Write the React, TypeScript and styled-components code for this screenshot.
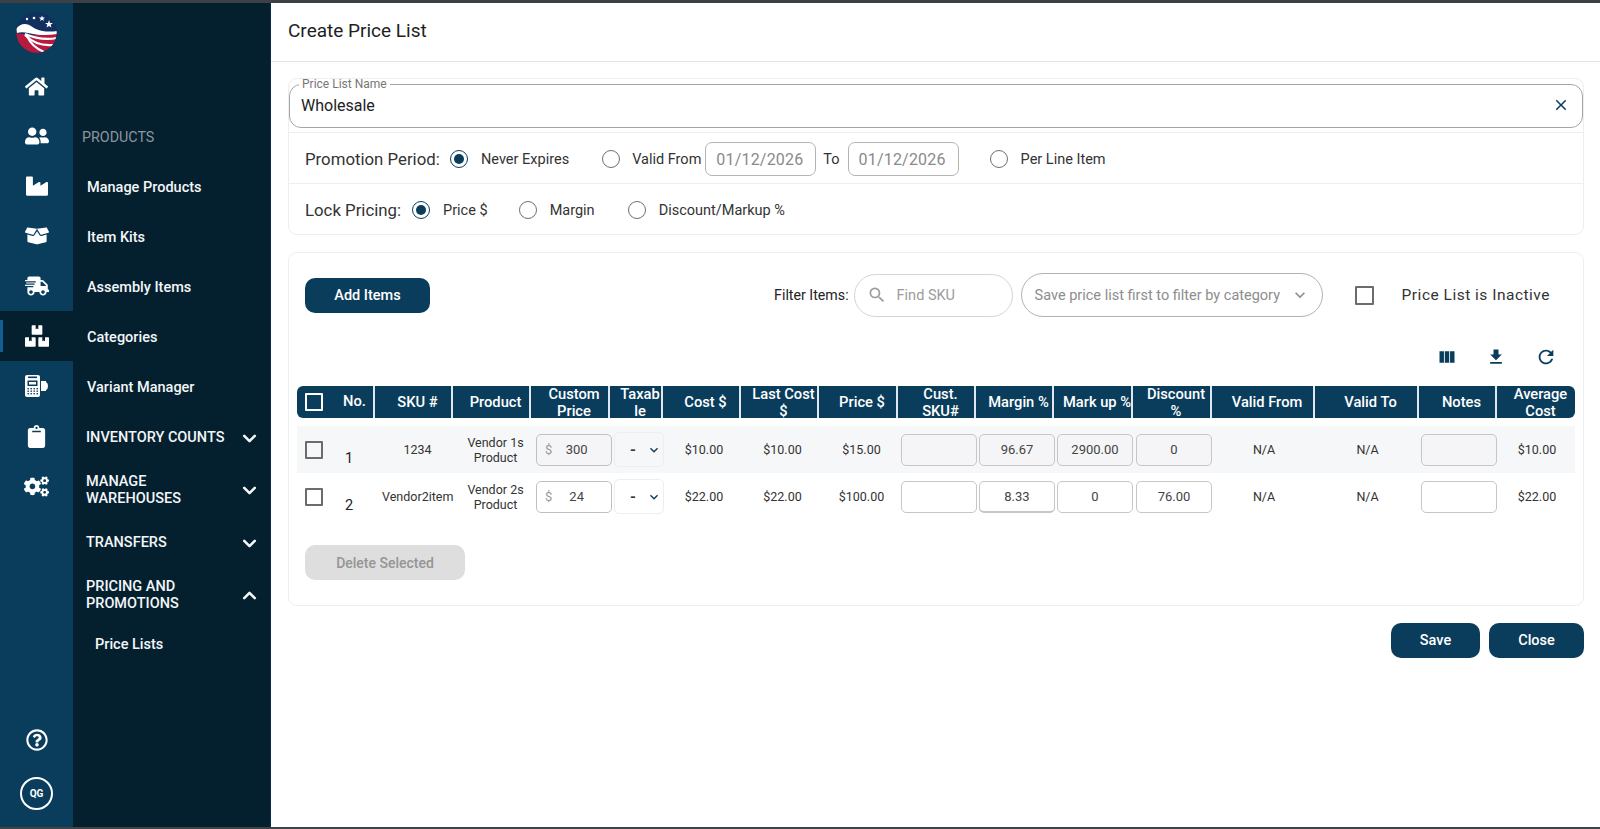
import React from "react";
import styled, { createGlobalStyle } from "styled-components";
import { FaHome, FaUserFriends, FaIndustry, FaBoxOpen, FaShippingFast, FaBoxes, FaClipboard, FaCogs, FaRegQuestionCircle } from "react-icons/fa";
import { MdViewColumn, MdFileDownload, MdRefresh, MdClose, MdSearch, MdKeyboardArrowDown } from "react-icons/md";
import { ChevronDown, ChevronUp } from "lucide-react";

const NAVY = "#0a3d5c";
const COLS = "78px 78px 78px 79px 53px 78px 78px 79px 78px 78px 79px 79px 103px 104px 78px 78px";

const Global = createGlobalStyle`
  html, body { margin: 0; padding: 0; height: 100%; background: #fff; }
  body { font-family: Roboto, "Liberation Sans", sans-serif; color: #222; overflow: hidden; }
  * { box-sizing: border-box; }
`;

const Frame = styled.div`
  height: 829px;
  display: flex;
  flex-direction: column;
  border-top: 3px solid #3b4144;
  border-bottom: 2px solid #3f4345;
`;
const Shell = styled.div`
  flex: 1;
  min-height: 0;
  display: flex;
`;
const Rail = styled.aside`
  width: 73px;
  background: ${NAVY};
  display: flex;
  flex-direction: column;
  color: #fff;
`;
const LogoBox = styled.div`
  height: 58px;
  display: flex;
  align-items: center;
  justify-content: center;
`;
const RailItem = styled.div<{ $active?: boolean }>`
  height: 50px;
  display: flex;
  align-items: center;
  justify-content: center;
  position: relative;
  background: ${(p) => (p.$active ? "#04202f" : "transparent")};
  ${(p) =>
    p.$active
      ? `&::before { content: ""; position: absolute; left: 0; top: 9px; width: 3px; height: 32px; background: #0f5f92; }`
      : ""}
`;
const RailFoot = styled.div`
  margin-top: auto;
  display: flex;
  flex-direction: column;
  align-items: center;
  gap: 26px;
  padding-bottom: 17px;
`;
const Avatar = styled.div`
  width: 33px;
  height: 33px;
  border: 2px solid #fff;
  border-radius: 50%;
  display: flex;
  align-items: center;
  justify-content: center;
  font-size: 10px;
  font-weight: 700;
`;
const Nav = styled.nav`
  width: 198px;
  background: #04202f;
  border-right: 1px solid #0a2c52;
  padding-top: 109px;
  color: #fff;
`;
const NavHead = styled.div`
  height: 50px;
  display: flex;
  align-items: center;
  padding-left: 9px;
  font-size: 14.3px;
  color: #8b969d;
`;
const NavLink = styled.div`
  height: 50px;
  display: flex;
  align-items: center;
  padding-left: 14px;
  font-size: 14.5px;
  font-weight: 500;
  color: #f3f6f8;
`;
const NavGroup = styled.div<{ $h: number }>`
  height: ${(p) => p.$h}px;
  display: flex;
  align-items: center;
  justify-content: space-between;
  padding: 0 10px 0 13px;
  font-size: 14.5px;
  font-weight: 500;
  line-height: 17.5px;
  color: #f3f6f8;
`;
const NavGroupText = styled.span`
  width: 146px;
`;
const NavGroupWrapped = styled(NavGroupText)`
  width: 130px;
`;
const NavSub = styled.div`
  height: 48px;
  display: flex;
  align-items: center;
  padding-left: 22px;
  font-size: 14.5px;
  font-weight: 500;
  color: #f3f6f8;
`;
const Main = styled.main`
  flex: 1;
  min-width: 0;
  background: #fff;
`;
const TitleBar = styled.header`
  height: 59px;
  border-bottom: 1px solid #e2e4e6;
  display: flex;
  align-items: center;
  padding: 0 0 4px 17px;
  font-size: 19px;
  color: #1e1e1e;
`;
const Body = styled.div`
  padding: 16px 16px 0 17px;
`;
const Card = styled.section`
  border: 1px solid #eceef0;
  border-radius: 9px;
`;
const NameField = styled.fieldset`
  margin: -1px 0 0;
  height: 50px;
  padding: 0 12px 0 11px;
  border: 1.5px solid #a3a6a8;
  border-radius: 12px;
  display: flex;
  align-items: center;
  justify-content: space-between;
`;
const NameLegend = styled.legend`
  font-size: 12px;
  line-height: 12px;
  padding: 0 3px;
  margin-left: -2px;
  color: #777;
`;
const NameInput = styled.input`
  flex: 1;
  border: 0;
  outline: 0;
  padding: 0;
  margin-top: -6px;
  font: 400 16px Roboto, sans-serif;
  color: #222;
  background: transparent;
`;
const ClearIcon = styled(MdClose)`
  margin-top: -7px;
  color: ${NAVY};
`;
const OptionRow = styled.div<{ $line?: boolean }>`
  height: 51px;
  display: flex;
  align-items: center;
  padding: 2px 0 0 16px;
  border-top: ${(p) => (p.$line ? "1px solid #eceef0" : "0")};
`;
const FirstRow = styled(OptionRow)`
  margin-top: 4px;
`;
const RowLabel = styled.span<{ $w: number }>`
  width: ${(p) => p.$w}px;
  font-size: 16.8px;
  color: #333;
  flex: none;
  white-space: nowrap;
`;
const Radio = styled.span<{ $on?: boolean; $left: number }>`
  width: 18px;
  height: 18px;
  margin-left: ${(p) => p.$left}px;
  flex: none;
  border-radius: 50%;
  border: 1.6px solid ${(p) => (p.$on ? NAVY : "#6f6f6f")};
  display: flex;
  align-items: center;
  justify-content: center;
  &::after {
    content: "";
    width: 10px;
    height: 10px;
    border-radius: 50%;
    background: ${(p) => (p.$on ? NAVY : "transparent")};
  }
`;
const RadioText = styled.span<{ $left?: number }>`
  margin-left: ${(p) => p.$left ?? 13}px;
  font-size: 14.5px;
  color: #333;
  white-space: nowrap;
`;
const DateBox = styled.div<{ $left: number }>`
  margin-left: ${(p) => p.$left}px;
  width: 111px;
  height: 34px;
  border: 1px solid #b4b4b4;
  border-radius: 7px;
  display: flex;
  align-items: center;
  justify-content: center;
  padding-right: 2px;
  font-size: 16px;
  color: #8a8a8a;
  letter-spacing: 0.2px;
`;
const TableCard = styled(Card)`
  margin-top: 17px;
  padding: 0 8px 25px;
`;
const Toolbar = styled.div`
  height: 84px;
  padding: 0 25px 0 8px;
  display: flex;
  align-items: center;
`;
const PrimaryButton = styled.button<{ $w: number }>`
  width: ${(p) => p.$w}px;
  height: 35px;
  border: 0;
  border-radius: 10px;
  background: ${NAVY};
  color: #fff;
  font: 500 14.5px Roboto, sans-serif;
  padding: 0;
`;
const FilterLabel = styled.span`
  margin-left: auto;
  font-size: 14.2px;
  color: #222;
`;
const SkuBox = styled.div`
  margin-left: 5px;
  width: 159px;
  height: 43px;
  border: 1px solid #d4d4d4;
  border-radius: 22px;
  display: flex;
  align-items: center;
  padding-left: 12px;
  gap: 10px;
  color: #9c9c9c;
  font-size: 14.5px;
`;
const CategorySelect = styled.div`
  margin-left: 8px;
  width: 302px;
  height: 44px;
  border: 1.5px solid #b3b3b3;
  border-radius: 22px;
  display: flex;
  align-items: center;
  justify-content: space-between;
  padding: 0 12px 0 13px;
  color: #8d8d8d;
  font-size: 14.5px;
  white-space: nowrap;
`;
const Check = styled.span<{ $light?: boolean; $size?: number }>`
  display: block;
  flex: none;
  width: ${(p) => p.$size ?? 18}px;
  height: ${(p) => p.$size ?? 18}px;
  border: 2px solid ${(p) => (p.$light ? "#fff" : "#6c6c6c")};
  border-radius: 1px;
`;
const InactiveCheck = styled(Check)`
  margin-left: 32px;
`;
const InactiveText = styled.span`
  margin-left: 28px;
  font-size: 15.5px;
  letter-spacing: 0.5px;
  color: #333;
`;
const TableTools = styled.div`
  height: 40px;
  display: flex;
  align-items: center;
  justify-content: flex-end;
  gap: 29px;
  padding-right: 18px;
  color: ${NAVY};
`;
const HeadRow = styled.div`
  display: grid;
  grid-template-columns: ${COLS};
  height: 32px;
  margin-top: 9px;
  background: ${NAVY};
  border-radius: 6px;
  overflow: hidden;
  margin-bottom: 8px;
`;
const HeadCell = styled.div`
  border-right: 2px solid #dfe8ee;
  display: flex;
  align-items: center;
  justify-content: center;
  text-align: center;
  color: #fff;
  font-size: 14.7px;
  font-weight: 500;
  line-height: 17.5px;
  height: 32px;
  padding: 2px 0 0 9px;
  overflow: hidden;
  white-space: nowrap;
  &:last-child { border-right: 0; }
`;
const HeadSelect = styled(HeadCell)`
  justify-content: flex-start;
  padding: 0 0 0 8px;
  gap: 20px;
`;
const Row = styled.div<{ $shade?: boolean }>`
  display: grid;
  grid-template-columns: ${COLS};
  height: 47px;
  background: ${(p) => (p.$shade ? "#f6f7f9" : "#fff")};
  align-items: center;
`;
const SelectCell = styled.div`
  display: flex;
  align-items: center;
  padding-left: 8px;
  gap: 22px;
`;
const RowNo = styled.span`
  font-size: 14.5px;
  padding-top: 17px;
  color: #222;
`;
const TextCell = styled.div<{ $shift?: number }>`
  padding-left: ${(p) => p.$shift ?? 4}px;
  text-align: center;
  font-size: 12.5px;
  line-height: 15px;
  color: #333;
`;
const CellInput = styled.input<{ $shade?: boolean; $inset?: number; $strong?: boolean }>`
  width: 76px;
  height: 32px;
  margin-left: ${(p) => p.$inset ?? 3}px;
  border: 1px solid #c6c6c6;
  border-bottom-width: ${(p) => (p.$strong ? 2 : 1)}px;
  border-radius: 5px;
  background: ${(p) => (p.$shade ? "#f5f5f7" : "#fff")};
  text-align: center;
  font: 400 13px Roboto, sans-serif;
  color: #444;
  padding: 0;
  outline: 0;
`;
const PriceBox = styled.div<{ $shade?: boolean }>`
  width: 76px;
  height: 32px;
  margin-left: 5px;
  border: 1px solid #c0c0c0;
  border-radius: 5px;
  background: ${(p) => (p.$shade ? "#f5f5f7" : "#fff")};
  display: flex;
  align-items: center;
  padding-left: 8px;
  font-size: 13px;
  color: #444;
`;
const Dollar = styled.span`
  color: #999;
`;
const PriceValue = styled.span`
  flex: 1;
  text-align: center;
  padding-right: 10px;
`;
const TaxSelect = styled.div<{ $shade?: boolean }>`
  width: 50px;
  height: 35px;
  margin-left: 4px;
  border: 1px solid #eeeeef;
  border-radius: 5px;
  background: ${(p) => (p.$shade ? "#f6f7f9" : "#fff")};
  display: flex;
  align-items: center;
  justify-content: space-between;
  padding: 0 1px 0 15px;
  font-size: 15px;
  font-weight: 700;
  color: #333;
  svg { color: ${NAVY}; }
`;
const DeleteButton = styled.button`
  display: block;
  margin: 25px 0 0 8px;
  width: 160px;
  height: 35px;
  border: 0;
  border-radius: 10px;
  background: #dedede;
  color: #959595;
  font: 500 14px Roboto, sans-serif;
  padding: 0;
`;
const Actions = styled.div`
  display: flex;
  justify-content: flex-end;
  gap: 9px;
  margin-top: 17px;
`;

const Logo = () => (
  <svg width="41" height="41" viewBox="0 0 41 41" aria-hidden="true">
    <defs>
      <clipPath id="logo-clip"><circle cx="20.5" cy="20.5" r="20.2" /></clipPath>
    </defs>
    <g clipPath="url(#logo-clip)">
      <rect width="41" height="41" fill="#11305f" />
      <path d="M0 21 C10 23 24 24 41 21 V41 H0 Z" fill="#b8193f" />
      <path d="M0 17 C2 14 5 12 9 12 C13 12 16 15 20 17 C27 20 34 20 41 19 V22 C30 24 20 23 12 21 C8 20 4 20 1 21 Z" fill="#fff" />
      <path d="M9 22 C18 26 30 28 41 26" stroke="#fff" strokeWidth="2.2" fill="none" />
      <path d="M9 23 C16 30 26 34 37 33" stroke="#fff" strokeWidth="2.2" fill="none" />
      <path d="M11 24 C14 31 21 37 28 40" stroke="#fff" strokeWidth="2" fill="none" />
      <polygon points="33,8 34,11 37,11 34.6,12.8 35.5,15.6 33,13.9 30.5,15.6 31.4,12.8 29,11 32,11" fill="#fff" />
      <polygon points="26,3.5 26.8,5.6 29,5.6 27.3,7 27.9,9 26,7.8 24.1,9 24.7,7 23,5.6 25.2,5.6" fill="#fff" />
      <circle cx="18" cy="6" r="1.3" fill="#fff" />
      <circle cx="11" cy="7" r="1.2" fill="#fff" />
    </g>
  </svg>
);

const Register = () => (
  <svg width="23" height="22" viewBox="0 0 23 22" aria-hidden="true">
    <path d="M2 0 H13 Q15 0 15 2 V20 Q15 22 13 22 H2 Q0 22 0 20 V2 Q0 0 2 0 Z" fill="#fff" />
    <rect x="16" y="6" width="5" height="10" fill="#fff" />
    <path d="M21 7 Q23 8 23 11 Q23 14 21 15 Z" fill="#fff" />
    <rect x="3" y="1.5" width="9" height="1.6" fill={NAVY} />
    <rect x="2.5" y="5.5" width="10" height="5.5" fill={NAVY} />
    <rect x="4" y="7" width="7" height="2.5" fill="#fff" />
    {[13, 15.5, 18].map((y) =>
      [3, 6, 9, 12].map((x) => <rect key={`${x}-${y}`} x={x - 0.5} y={y} width="1.4" height="1.4" fill={NAVY} />)
    )}
  </svg>
);

const railItems: { icon: React.ReactNode; active?: boolean }[] = [
  { icon: <FaHome size={23} /> },
  { icon: <FaUserFriends size={24} /> },
  { icon: <FaIndustry size={22} /> },
  { icon: <FaBoxOpen size={24} /> },
  { icon: <FaShippingFast size={24} /> },
  { icon: <FaBoxes size={24} />, active: true },
  { icon: <Register /> },
  { icon: <FaClipboard size={23} /> },
  { icon: <FaCogs size={25} /> },
];

const links = ["Manage Products", "Item Kits", "Assembly Items", "Categories", "Variant Manager"];
const groups = [
  { label: "INVENTORY COUNTS", h: 52 },
  { label: "MANAGE WAREHOUSES", h: 52, wrap: true },
  { label: "TRANSFERS", h: 54 },
  { label: "PRICING AND PROMOTIONS", h: 50, open: true, wrap: true },
];
const headers: string[][] = [["SKU #"], ["Product"], ["Custom", "Price"], ["Taxab", "le"], ["Cost $"], ["Last Cost", "$"], ["Price $"], ["Cust.", "SKU#"], ["Margin %"], ["Mark up %"], ["Discount", "%"], ["Valid From"], ["Valid To"], ["Notes"], ["Average", "Cost"]];

const rows = [
  { no: 1, sku: "1234", vendor: "Vendor 1s", custom: "300", cost: "$10.00", last: "$10.00", price: "$15.00", margin: "96.67", markup: "2900.00", discount: "0", avg: "$10.00", shade: true },
  { no: 2, sku: "Vendor2item", vendor: "Vendor 2s", custom: "24", cost: "$22.00", last: "$22.00", price: "$100.00", margin: "8.33", markup: "0", discount: "76.00", avg: "$22.00", shade: false },
];

export default function App() {
  return (
    <>
      <Global />
      <Frame>
        <Shell>
          <Rail>
            <LogoBox><Logo /></LogoBox>
            {railItems.map((item, i) => (
              <RailItem key={i} $active={item.active}>{item.icon}</RailItem>
            ))}
            <RailFoot>
              <FaRegQuestionCircle size={22} />
              <Avatar>QG</Avatar>
            </RailFoot>
          </Rail>
          <Nav>
            <NavHead>PRODUCTS</NavHead>
            {links.map((l) => <NavLink key={l}>{l}</NavLink>)}
            {groups.map((g) => (
              <NavGroup key={g.label} $h={g.h}>
                {g.wrap ? <NavGroupWrapped>{g.label}</NavGroupWrapped> : <NavGroupText>{g.label}</NavGroupText>}
                {g.open ? <ChevronUp size={21} strokeWidth={3} /> : <ChevronDown size={21} strokeWidth={3} />}
              </NavGroup>
            ))}
            <NavSub>Price Lists</NavSub>
          </Nav>
          <Main>
            <TitleBar>Create Price List</TitleBar>
            <Body>
              <Card>
                <NameField>
                  <NameLegend>Price List Name</NameLegend>
                  <NameInput readOnly value="Wholesale" />
                  <ClearIcon size={18} />
                </NameField>
                <FirstRow $line>
                  <RowLabel $w={134}>Promotion Period:</RowLabel>
                  <Radio $on $left={11} />
                  <RadioText>Never Expires</RadioText>
                  <Radio $left={33} />
                  <RadioText $left={12}>Valid From</RadioText>
                  <DateBox $left={4}>01/12/2026</DateBox>
                  <RadioText $left={7}>To</RadioText>
                  <DateBox $left={8}>01/12/2026</DateBox>
                  <Radio $left={31} />
                  <RadioText>Per Line Item</RadioText>
                </FirstRow>
                <OptionRow $line>
                  <RowLabel $w={96}>Lock Pricing:</RowLabel>
                  <Radio $on $left={11} />
                  <RadioText>Price $</RadioText>
                  <Radio $left={31} />
                  <RadioText>Margin</RadioText>
                  <Radio $left={33} />
                  <RadioText>Discount/Markup %</RadioText>
                </OptionRow>
              </Card>
              <TableCard>
                <Toolbar>
                  <PrimaryButton $w={125}>Add Items</PrimaryButton>
                  <FilterLabel>Filter Items:</FilterLabel>
                  <SkuBox><MdSearch size={20} />Find SKU</SkuBox>
                  <CategorySelect>
                    Save price list first to filter by category
                    <MdKeyboardArrowDown size={20} />
                  </CategorySelect>
                  <InactiveCheck $size={19} />
                  <InactiveText>Price List is Inactive</InactiveText>
                </Toolbar>
                <TableTools>
                  <MdViewColumn size={20} />
                  <MdFileDownload size={20} />
                  <MdRefresh size={22} />
                </TableTools>
                <HeadRow>
                  <HeadSelect><Check $light />No.</HeadSelect>
                  {headers.map((h) => (
                    <HeadCell key={h[0]}>
                      <span>
                        {h[0]}
                        {h[1] ? <><br />{h[1]}</> : null}
                      </span>
                    </HeadCell>
                  ))}
                </HeadRow>
                {rows.map((r) => (
                  <Row key={r.no} $shade={r.shade}>
                    <SelectCell><Check /><RowNo>{r.no}</RowNo></SelectCell>
                    <TextCell $shift={7}>{r.sku}</TextCell>
                    <TextCell $shift={7}>{r.vendor}<br />Product</TextCell>
                    <PriceBox $shade={r.shade}><Dollar>$</Dollar><PriceValue>{r.custom}</PriceValue></PriceBox>
                    <TaxSelect $shade={r.shade}>-<MdKeyboardArrowDown size={16} /></TaxSelect>
                    <TextCell>{r.cost}</TextCell>
                    <TextCell $shift={5}>{r.last}</TextCell>
                    <TextCell $shift={6}>{r.price}</TextCell>
                    <CellInput readOnly value="" $shade={r.shade} />
                    <CellInput readOnly value={r.margin} $shade={r.shade} $strong={r.no === 2} />
                    <CellInput readOnly value={r.markup} $shade={r.shade} />
                    <CellInput readOnly value={r.discount} $shade={r.shade} />
                    <TextCell $shift={1}>N/A</TextCell>
                    <TextCell $shift={1}>N/A</TextCell>
                    <CellInput readOnly value="" $shade={r.shade} $inset={2} />
                    <TextCell $shift={2}>{r.avg}</TextCell>
                  </Row>
                ))}
                <DeleteButton>Delete Selected</DeleteButton>
              </TableCard>
              <Actions>
                <PrimaryButton $w={89}>Save</PrimaryButton>
                <PrimaryButton $w={95}>Close</PrimaryButton>
              </Actions>
            </Body>
          </Main>
        </Shell>
      </Frame>
    </>
  );
}
